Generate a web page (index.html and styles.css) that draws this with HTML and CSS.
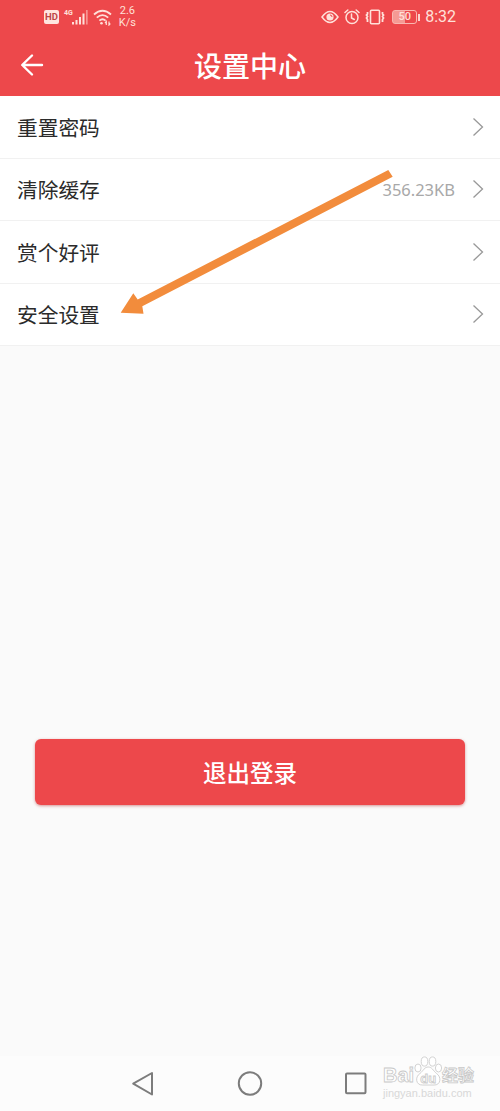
FILE: index.html
```html
<!DOCTYPE html>
<html lang="zh-CN">
<head>
<meta charset="utf-8">
<meta name="viewport" content="width=device-width, initial-scale=1">
<title>设置中心</title>
<link rel="stylesheet" href="styles.css">
</head>
<body>
<div class="screen">
  <header class="header">
    <div class="status">
      <div class="status-left">
        <span class="hd">HD</span>
        <span class="net">4G</span>
        <svg class="signal" width="16" height="16" viewBox="0 0 16 16" fill="currentColor"><path d="M0 13h2v2.500H0zM3.500 11h2v4.500h-2zM7 8h2v7.500H7zM10.500 4.500h2v11h-2z"/><path d="M14 1h1.700v14.500H14z" opacity=".5"/></svg>
        <svg class="wifi" width="20" height="17" viewBox="0 0 20 17" fill="none" stroke="currentColor" stroke-width="1.800"><path d="M1 5.500Q9.500-2 18 5.500M3.800 8.700Q9.500 3.600 15.200 8.700M6.400 11.700Q9.500 8.900 12.600 11.700"/><circle cx="8.500" cy="14.300" r="1.300" fill="currentColor" stroke="none"/><path d="M12 14l1.300-1.500v3.500M16 12.500v3.500l1.300-1.500" stroke-width="1.200"/></svg>
        <span class="speed">2.6<br>K/s</span>
      </div>
      <div class="status-right">
        <svg width="18" height="14" viewBox="0 0 18 14" fill="none" stroke="currentColor" stroke-width="1.500"><path d="M1 7Q9-4 17 7Q9 18 1 7Z"/><circle cx="9" cy="7" r="3.600" fill="currentColor" stroke="none"/><path d="M9 5q2 0 2 2" stroke="#ed484b" stroke-width="1"/></svg>
        <svg width="16" height="16" viewBox="0 0 16 16" fill="none" stroke="currentColor" stroke-width="1.500" stroke-linecap="round"><circle cx="8" cy="8.500" r="6"/><path d="M1 3.500L3.800 1M15 3.500L12.200 1M7.500 5v4l2.800 1.500"/></svg>
        <svg width="20" height="16" viewBox="0 0 20 16" fill="none" stroke="currentColor" stroke-width="1.600"><rect x="5.500" y="1.200" width="9" height="13.600" rx="1"/><path d="M2.500 3v2l-1 1 1 1.500-1 1.500 1 1.500V13M17.500 3v2l1 1-1 1.500 1 1.500-1 1.500V13" stroke-width="1.800"/></svg>
        <span class="battery"><span class="battery-body">50</span><span class="battery-tip"></span></span>
        <span class="clock">8:32</span>
      </div>
    </div>
    <div class="titlebar">
      <svg class="back" width="24" height="24" viewBox="0 0 24 24" fill="none" stroke="#fff" stroke-width="2.400" stroke-linecap="round" stroke-linejoin="round"><path d="M12 2.500L2.200 12 12 21.500M2.500 12H22"/></svg>
      <h1 class="title">设置中心</h1>
      <span></span>
    </div>
  </header>

  <main class="content">
    <ul class="list">
      <li class="row"><span>重置密码</span><svg class="chevron" viewBox="0 0 12 20"><path d="M1.500 1.500L10.500 10 1.500 18.500"/></svg></li>
      <li class="row"><span>清除缓存</span><span class="value">356.23KB</span><svg class="chevron" viewBox="0 0 12 20"><path d="M1.500 1.500L10.500 10 1.500 18.500"/></svg></li>
      <li class="row"><span>赏个好评</span><svg class="chevron" viewBox="0 0 12 20"><path d="M1.500 1.500L10.500 10 1.500 18.500"/></svg></li>
      <li class="row"><span>安全设置</span><svg class="chevron" viewBox="0 0 12 20"><path d="M1.500 1.500L10.500 10 1.500 18.500"/></svg></li>
    </ul>
    <button class="logout" type="button">退出登录</button>
  </main>

  <nav class="nav">
    <svg width="24" height="28" viewBox="0 0 24 28"><path d="M21 3V24.500L2.200 13.700Z"/></svg>
    <svg width="26" height="28" viewBox="0 0 26 28"><circle cx="13" cy="13.500" r="11.200"/></svg>
    <svg width="24" height="28" viewBox="0 0 24 28"><rect x="1" y="3.500" width="19.500" height="19.800" rx="1"/></svg>
  </nav>

  <svg class="arrow" width="280" height="150" viewBox="0 0 280 150"><path d="M268.300 1L272.700 7.800 22.300 137.200 23.500 144.800 .7 143.700 13.300 124.300 17.700 130.500Z"/></svg>

  <div class="watermark">
    <div class="brand">
      <span class="brand-name">Bai</span>
      <svg class="paw" width="28" height="31" viewBox="0 0 28 31"><ellipse cx="10.500" cy="5.500" rx="3.300" ry="4.600"/><ellipse cx="18.500" cy="5.500" rx="3.300" ry="4.600"/><ellipse cx="4" cy="12" rx="3.100" ry="4"/><ellipse cx="24.500" cy="12" rx="3.100" ry="4"/><path d="M14.200 11C10.500 11 9.500 14.500 6 17.500C.5 21 2 29.500 8.500 29H20C26.500 29.500 28 21 22.500 17.500C19 14.500 18 11 14.200 11Z"/><text x="14.200" y="26.500" text-anchor="middle">du</text></svg>
      <span class="brand-cn">经验</span>
    </div>
    <div class="site">jingyan.baidu.com</div>
  </div>
</div>
</body>
</html>
```

FILE: styles.css
```css
* {
  box-sizing: border-box;
}

body {
  margin: 0;
  background: #fafafa;
  color: #2b2b2b;
  font-family: "KaiTi", "STKaiti", "Noto Sans CJK SC", sans-serif;
}

.screen {
  position: relative;
  display: flex;
  flex-direction: column;
  width: 500px;
  height: 1111px;
  overflow: hidden;
}

.header {
  height: 96px;
  background: #ed484b;
  color: #ffe0d9;
}

.status {
  display: flex;
  justify-content: space-between;
  height: 34px;
  padding: 0 44px 0 44px;
  font-family: Roboto, sans-serif;
}

.status-left,
.status-right {
  display: flex;
  align-items: center;
}

.status-right {
  gap: 5px;
}

.hd {
  width: 15px;
  height: 14px;
  border-radius: 2px;
  background: #ffe5df;
  color: #bd4546;
  font-size: 9.5px;
  font-weight: 700;
  line-height: 14px;
  text-align: center;
}

.net {
  margin: 0 0 9px 5px;
  font-size: 7px;
  font-weight: 700;
  line-height: 8px;
}

.signal {
  margin-left: -1px;
}

.wifi {
  margin-left: 5px;
}

.speed {
  margin-left: 6px;
  font-size: 11px;
  line-height: 12.5px;
  text-align: center;
}

.battery {
  display: flex;
  align-items: center;
  gap: 1px;
  margin-left: 2px;
}

.battery-body {
  width: 25px;
  height: 14px;
  border: 1px solid #f9b7b0;
  border-radius: 3px;
  background: linear-gradient(90deg, #f59a94 50%, transparent 50%);
  font-size: 11px;
  font-weight: 500;
  line-height: 12px;
  text-align: center;
}

.battery-tip {
  width: 2px;
  height: 7px;
  background: #ffd4cd;
}

.clock {
  font-size: 16px;
  line-height: 20px;
}

.titlebar {
  display: grid;
  grid-template-columns: 60px 1fr 60px;
  align-items: center;
  height: 62px;
}

.back {
  margin-left: 20px;
}

.title {
  margin: 0;
  color: #fff;
  font-size: 28px;
  font-weight: 500;
  line-height: 40px;
  text-align: center;
}

.content {
  display: flex;
  flex: 1;
  flex-direction: column;
}

.list {
  margin: 0;
  padding: 0;
  background: #fff;
  list-style: none;
}

.row {
  display: flex;
  align-items: center;
  height: 62.5px;
  padding: 0 16px 0 17px;
  border-bottom: 1px solid #f1f1f1;
  font-size: 20.7px;
  line-height: 30px;
}

.value {
  margin-left: auto;
  padding-top: 2px;
  color: #a8a8a8;
  font-family: "Noto Sans", sans-serif;
  font-size: 16.5px;
}

.chevron {
  width: 12px;
  height: 20px;
  margin-left: auto;
  fill: none;
  stroke: #999;
  stroke-width: 1.3;
}

.value + .chevron {
  margin-left: 17px;
}

.logout {
  height: 66px;
  margin: 393px 35px 0;
  padding: 0;
  border: 0;
  border-radius: 6px;
  background: #ed484b;
  box-shadow: 0 1px 3px rgba(180, 50, 50, 0.5);
  color: #fff;
  font-family: inherit;
  font-size: 23.5px;
  font-weight: 500;
}

.nav {
  display: flex;
  align-items: center;
  gap: 82px;
  height: 55px;
  padding-left: 131px;
  background: #fcfcfc;
}

.nav svg {
  fill: none;
  stroke: #7c7c7c;
  stroke-width: 2;
  stroke-linejoin: round;
}

.arrow {
  position: absolute;
  top: 169px;
  left: 120px;
  fill: #f28c3c;
}

.watermark {
  position: absolute;
  top: 1056px;
  left: 383px;
  width: 92px;
  color: #fff;
  font-family: "Liberation Sans", "Noto Sans CJK SC", sans-serif;
  -webkit-text-stroke: 0.8px #c8c8c8;
}

.brand {
  display: flex;
  align-items: flex-end;
  height: 31px;
}

.brand-name {
  width: 31px;
  font-size: 20px;
  font-weight: 700;
  line-height: 23px;
}

.paw {
  fill: #fff;
  stroke: #cdcdcd;
  stroke-width: 0.9;
}

.paw text {
  font-size: 13px;
  font-weight: 700;
  -webkit-text-stroke: 0;
}

.brand-cn {
  font-size: 16px;
  font-weight: 700;
  line-height: 22px;
}

.site {
  color: #d8d8d8;
  font-size: 11px;
  line-height: 12px;
  -webkit-text-stroke: 0;
}
```
